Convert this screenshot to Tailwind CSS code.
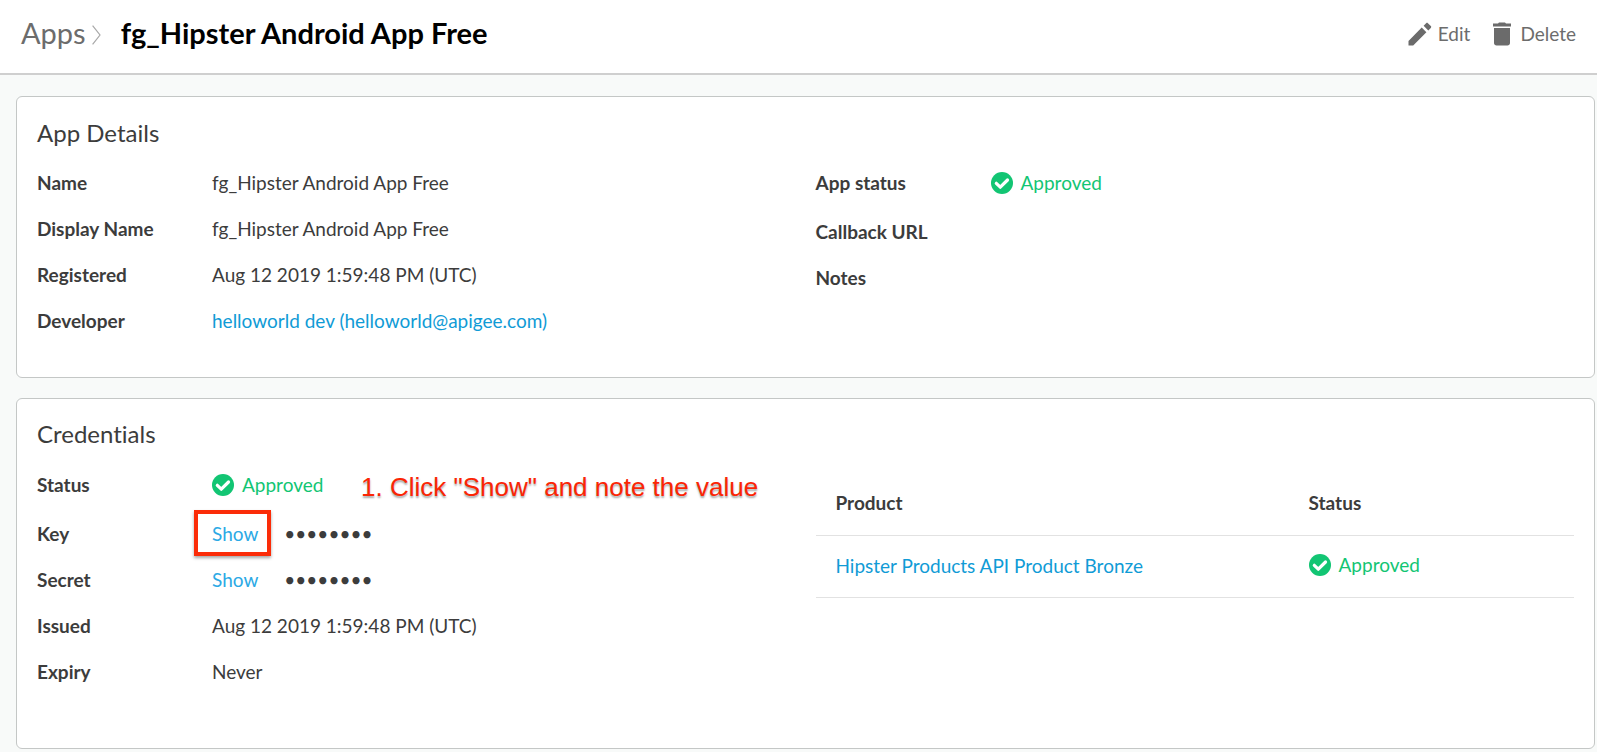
<!DOCTYPE html>
<html lang="en">
<head>
<meta charset="utf-8">
<meta name="viewport" content="width=device-width, initial-scale=1">
<title>fg_Hipster Android App Free</title>
<script src="https://cdn.jsdelivr.net/npm/@tailwindcss/browser@4"></script>
</head>
<body class="min-h-screen border-r-[3px] border-white bg-[#f8faf9] bg-clip-padding font-['Lato',sans-serif] text-[19px] leading-6 text-[#3c3c3c] [font-variant-ligatures:none]">
<svg class="hidden" aria-hidden="true">
  <symbol id="check" viewBox="0 0 22 22">
    <circle cx="11" cy="11" r="11" fill="#12c573"/>
    <path d="M5.300 11.300l4 3.900 7.200-7.200" fill="none" stroke="#fff" stroke-width="3.2" stroke-linecap="round" stroke-linejoin="round"/>
  </symbol>
</svg>

<header class="flex items-center justify-between border-b-2 border-[#cfcfcf] bg-white pt-[6px] pr-[21px] pb-[14px] pl-[21px]">
  <div class="flex h-[53px] items-center">
    <a href="#" class="text-[29px] leading-8 text-[#6c6c6c]">Apps</a>
    <svg class="mt-1 ml-[6px] h-5 w-[9px]" viewBox="0 0 9 20" fill="none" stroke="#a8a8a8" stroke-width="1.2" aria-hidden="true"><path d="M.6 .6L8 10 .6 19.4"/></svg>
    <h1 class="ml-5 text-[29px] leading-8 font-bold text-black">fg_Hipster Android App Free</h1>
  </div>
  <div class="flex items-center gap-[22px] pt-[2px] text-[#6c6c6c]">
    <button type="button" class="flex items-center gap-[6px]">
      <svg class="h-6 w-6" viewBox="0 0 24 24" fill="#6b6b6b" aria-hidden="true"><path d="M.5 19v4.500h4.700L18.400 10.300l-4.700-4.700zM22.800 5.900c.6-.6.6-1.300 0-1.800L19.900 1.200c-.5-.5-1.200-.5-1.800 0l-2.500 2.500 4.700 4.700z"/></svg>
      Edit
    </button>
    <button type="button" class="flex items-center gap-2">
      <svg class="h-6 w-5" viewBox="0 0 20 24" fill="#6b6b6b" aria-hidden="true"><path d="M2 21c0 1.600 1.100 2.500 2.500 2.500h11c1.400 0 2.500-.9 2.500-2.500V6H2zM1 1.500h5L7 .5h6l1 1h5v3H1z"/></svg>
      Delete
    </button>
  </div>
</header>

<main class="flex flex-col gap-5 pt-[21px] pr-[2px] pb-[3px] pl-4">
  <section class="rounded-md border border-[#c4c7c6] bg-white px-5 pt-5 pb-11">
    <h2 class="text-2xl leading-8">App Details</h2>
    <div class="mt-[22px] grid grid-cols-2 gap-x-5">
      <dl class="grid grid-cols-[175px_1fr] content-start gap-y-[22px]">
        <dt class="font-bold">Name</dt><dd>fg_Hipster Android App Free</dd>
        <dt class="font-bold">Display Name</dt><dd>fg_Hipster Android App Free</dd>
        <dt class="font-bold">Registered</dt><dd>Aug 12 2019 1:59:48 PM (UTC)</dd>
        <dt class="font-bold">Developer</dt><dd><a href="#" class="text-[#109bd6]">helloworld dev (helloworld@apigee.com)</a></dd>
      </dl>
      <dl class="grid grid-cols-[175px_1fr] content-start gap-y-[22px]">
        <dt class="pb-[3px] font-bold">App status</dt>
        <dd class="flex items-start gap-2 text-[#12c573]"><svg class="h-6 w-[22px]" aria-hidden="true"><use href="#check"/></svg>Approved</dd>
        <dt class="font-bold">Callback URL</dt><dd></dd>
        <dt class="font-bold">Notes</dt><dd></dd>
      </dl>
    </div>
  </section>

  <section class="rounded-md border border-[#c4c7c6] bg-white px-5 pt-[19px] pb-16">
    <h2 class="text-2xl leading-8">Credentials</h2>
    <div class="mt-[23px] grid grid-cols-2 gap-x-5">
      <dl class="grid grid-cols-[175px_1fr] content-start gap-y-[22px]">
        <dt class="pb-[3px] font-bold">Status</dt>
        <dd class="relative flex items-start gap-2 text-[#12c573]"><svg class="h-6 w-[22px]" aria-hidden="true"><use href="#check"/></svg>Approved
          <span class="absolute -top-[2px] left-[149px] font-['Liberation_Sans',sans-serif] text-[26px] leading-8 whitespace-nowrap text-[#fb2504] [text-shadow:0_2px_2px_rgb(0_0_0/0.35)]">1. Click "Show" and note the value</span>
        </dd>
        <dt class="font-bold">Key</dt>
        <dd class="flex gap-[26px]"><button type="button" class="relative text-[#2ba9e5]">Show<span class="absolute -top-3 -right-[13px] -bottom-[10px] -left-[18px] border-4 border-[#fb2c08] shadow-[0_2px_3px_rgb(0_0_0/0.35)]"></span></button><span>••••••••</span></dd>
        <dt class="font-bold">Secret</dt>
        <dd class="flex gap-[26px]"><button type="button" class="text-[#2ba9e5]">Show</button><span>••••••••</span></dd>
        <dt class="font-bold">Issued</dt><dd>Aug 12 2019 1:59:48 PM (UTC)</dd>
        <dt class="font-bold">Expiry</dt><dd>Never</dd>
      </dl>
      <div>
        <table class="w-full table-fixed text-left">
          <thead>
            <tr class="border-b border-[#e2e2e2]"><th class="w-[65%] px-5 pt-[18px] pb-5 font-bold">Product</th><th class="pt-[18px] pr-5 pb-5 font-bold">Status</th></tr>
          </thead>
          <tbody>
            <tr class="border-b border-[#e2e2e2]"><td class="px-5 pt-[18px] pb-[19px]"><a href="#" class="text-[#109bd6]">Hipster Products API Product Bronze</a></td><td class="pr-5 pb-1"><span class="flex items-center gap-2 text-[#12c573]"><svg class="h-[22px] w-[22px]" aria-hidden="true"><use href="#check"/></svg>Approved</span></td></tr>
          </tbody>
        </table>
      </div>
    </div>
  </section>
</main>
</body>
</html>
